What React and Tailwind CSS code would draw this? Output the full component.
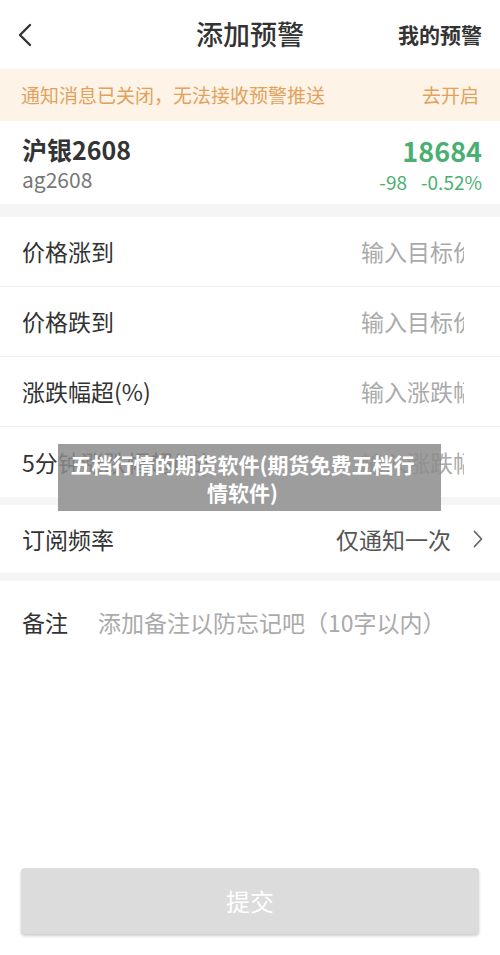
import React from 'react';

const font = { fontFamily: '"Noto Sans CJK SC", "Noto Sans", sans-serif' };

const alertRows = [
    { label: '涨价到', text: '价格涨到', hint: '输入目标价' },
    { label: '跌价到', text: '价格跌到', hint: '输入目标价' },
    { label: '涨跌幅', text: '涨跌幅超(%)', hint: '输入涨跌幅' },
    { label: '5分钟', text: '5分钟涨跌幅超(%)', hint: '输入涨跌幅' },
];

const AlertRow = ({ text, hint, last }) => (
    <div className={`flex h-[70px] items-center justify-between pl-[22px] pr-[36px] ${last ? '' : 'border-b border-[#f0f0f0]'}`}>
        <span className="text-[23px] text-[#333]">{text}</span>
        <div className="w-[103px] overflow-hidden whitespace-nowrap text-[23px] text-[#aaa]">{hint}</div>
    </div>
);

const App = () => {
    return (
        <div className="relative flex h-[955px] w-[500px] flex-col bg-white" style={font}>
            {/* header */}
            <div className="grid h-[69px] grid-cols-[1fr_auto_1fr] items-center px-[18px]">
                <svg width="14" height="24" viewBox="0 0 14 24" fill="none" stroke="#333" strokeWidth="2.4" strokeLinecap="round" strokeLinejoin="round">
                    <path d="M12 2 L2 12 L12 22" />
                </svg>
                <span className="text-[27px] font-medium text-[#333]">添加预警</span>
                <span className="justify-self-end text-[21px] font-bold text-[#333]">我的预警</span>
            </div>

            {/* notice banner */}
            <div className="flex h-[52px] items-center justify-between bg-[#fdf3e7] px-[21px] text-[19px] text-[#e3a15c]">
                <span>通知消息已关闭，无法接收预警推送</span>
                <span>去开启</span>
            </div>

            {/* quote */}
            <div className="flex h-[83px] items-center justify-between pl-[22px] pr-[18px]">
                <div className="flex flex-col">
                    <span className="text-[25px] font-bold leading-[32px] text-[#333]">沪银2608</span>
                    <span className="text-[21px] leading-[28px] text-[#777]">ag2608</span>
                </div>
                <div className="flex flex-col items-end pt-[2px]">
                    <span className="text-[27px] font-bold leading-[36px] text-[#4caf72]">18684</span>
                    <span className="flex gap-[14px] text-[19px] leading-[26px] text-[#4caf72]">
                        <span>-98</span>
                        <span>-0.52%</span>
                    </span>
                </div>
            </div>

            <div className="h-[13px] bg-[#f5f5f5]" />

            {alertRows.map((row, i) => (
                <AlertRow key={row.label} text={row.text} hint={row.hint} last={i === alertRows.length - 1} />
            ))}

            <div className="h-[8px] bg-[#f5f5f5]" />

            {/* frequency */}
            <div className="flex h-[68px] items-center justify-between pl-[22px] pr-[17px]">
                <span className="text-[23px] text-[#333]">订阅频率</span>
                <div className="flex items-center gap-[22px]">
                    <span className="text-[23px] text-[#555]">仅通知一次</span>
                    <svg width="10" height="18" viewBox="0 0 10 18" fill="none" stroke="#666" strokeWidth="1.8" strokeLinecap="round" strokeLinejoin="round">
                        <path d="M1.5 1.5 L8.5 9 L1.5 16.5" />
                    </svg>
                </div>
            </div>

            <div className="h-[8px] bg-[#f5f5f5]" />

            {/* remark */}
            <div className="flex items-center gap-[30px] pl-[22px] pt-[24px]">
                <span className="text-[23px] text-[#333]">备注</span>
                <span className="text-[23px] text-[#aaa]">添加备注以防忘记吧（10字以内）</span>
            </div>

            <div className="flex-1" />

            <div className="px-[21px] pb-[21px]">
                <button className="flex h-[66px] w-full items-center justify-center rounded-[4px] bg-[#dcdcdc] text-[24px] text-white shadow-[0_2px_3px_rgba(0,0,0,0.2)]">
                    提交
                </button>
            </div>

            {/* watermark caption */}
            <div className="absolute left-[58px] top-[444px] flex h-[67px] w-[383px] flex-col items-center justify-center bg-[rgba(140,140,140,0.85)] pr-[14px] text-center text-[21px] font-bold leading-[28px] text-white">
                <span className="whitespace-nowrap">五档行情的期货软件(期货免费五档行</span>
                <span>情软件)</span>
            </div>
        </div>
    );
};

export default App;
